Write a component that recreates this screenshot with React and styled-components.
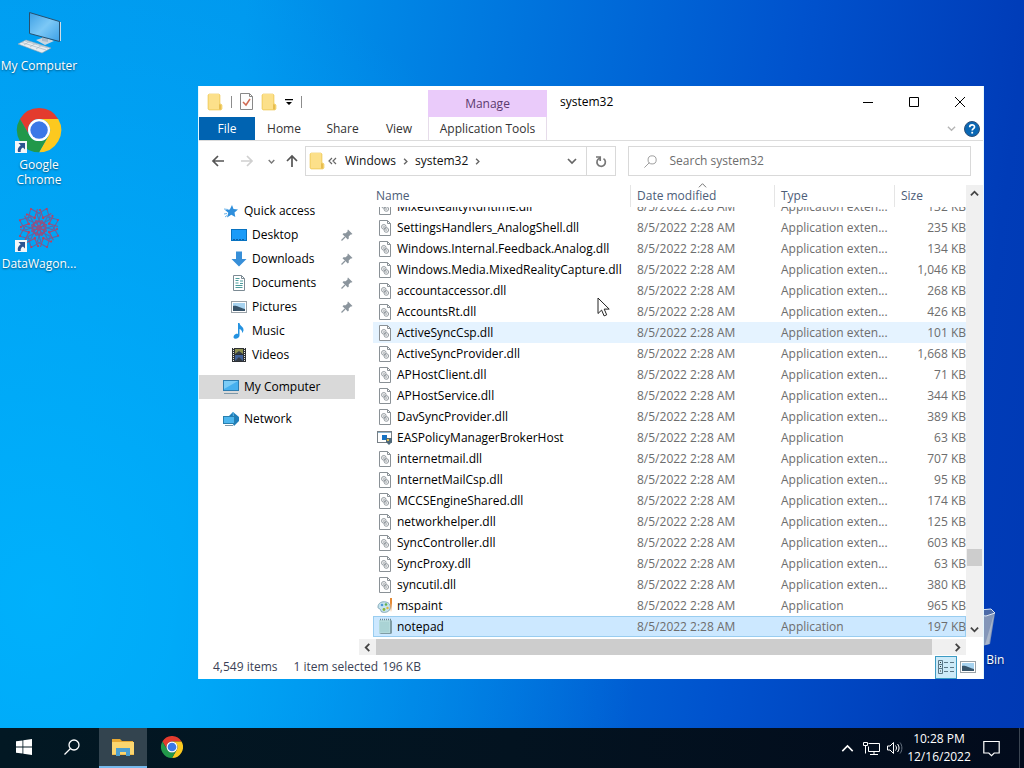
import React from "react";
import styled, { createGlobalStyle, css } from "styled-components";

const GlobalStyles = createGlobalStyle`
  * {
    box-sizing: border-box;
  }

  body {
    margin: 0;
    font-family: "Open Sans", "Noto Sans", sans-serif;
    font-size: 12px;
    line-height: 16px;
    color: #1a1a1a;
  }

  button, input {
    font: inherit;
    color: inherit;
  }

  button {
    display: flex;
    align-items: center;
    justify-content: center;
    flex: none;
    margin: 0;
    padding: 0;
    border: none;
    background: none;
  }

  svg {
    display: block;
    flex: none;
  }
`;

/* ---------- desktop ---------- */

const Screen = styled.div`
  display: flex;
  flex-direction: column;
  height: 100vh;
  overflow: hidden;
  background:
    radial-gradient(ellipse 600px 680px at 4% 78%, rgba(0, 182, 255, 0.8), rgba(0, 172, 255, 0) 100%),
    linear-gradient(97deg, #009cf0 0%, #0098ee 22%, #0076de 46%, #0052cd 72%, #003cb8 92%, #0039b4 100%);
`;

const Desktop = styled.main`
  position: relative;
  flex: 1;
  min-height: 0;
`;

const Shortcuts = styled.div`
  display: flex;
  flex-direction: column;
  width: 78px;
  padding-top: 8px;
`;

const ShortcutButton = styled.button`
  flex-direction: column;
  justify-content: flex-start;
  gap: 2px;
  width: 78px;
  height: 99px;
  color: #fff;
  line-height: 15px;
  text-shadow: 0 1px 2px rgba(0, 0, 0, 0.5);
`;

const BinSpot = styled.div`
  position: absolute;
  right: 12px;
  bottom: 27px;
`;

/* ---------- window ---------- */

const Window = styled.section`
  position: absolute;
  top: 86px;
  left: 198px;
  right: 40px;
  bottom: 49px;
  display: flex;
  flex-direction: column;
  border: solid #e4f8ff;
  border-width: 0 1px;
  background: #fff;
`;

const Ribbon = styled.header`
  display: grid;
  grid-template-columns: 229px 119px 1fr;
  grid-template-rows: 31px 23px;
  border-bottom: 1px solid #dcdcdc;
`;

const QuickBar = styled.div`
  display: flex;
  align-items: center;
  gap: 8px;
  padding-left: 8px;
`;

const Divider = styled.span`
  width: 1px;
  height: 12px;
  background: #8c8c8c;
`;

const ManageTitle = styled.div`
  margin-top: 4px;
  line-height: 28px;
  text-align: center;
  color: #5b3a6e;
  background: #eacbfa;
`;

const TitleArea = styled.div`
  display: flex;
  align-items: center;
  justify-content: space-between;
  padding-left: 13px;
`;

const Title = styled.h1`
  margin: 0;
  font-size: 12px;
  font-weight: 400;
  color: #000;
`;

const Captions = styled.div`
  display: flex;

  button {
    width: 46px;
    height: 30px;
  }
`;

const Tabs = styled.nav`
  display: flex;
`;

const Tab = styled.button`
  width: ${(p) => p.$width}px;
  color: #333;

  ${(p) =>
    p.$file &&
    css`
      color: #fff;
      background: #0063b1;
    `}

  ${(p) =>
    p.$context &&
    css`
      border: solid #e6dcea;
      border-width: 0 1px;
    `}
`;

const RibbonEnd = styled.div`
  display: flex;
  align-items: center;
  justify-content: flex-end;
  gap: 8px;
  padding-right: 3px;
`;

const AddressRow = styled.div`
  display: flex;
  align-items: center;
  height: 40px;
  padding: 0 12px 0 7px;
`;

const NavButton = styled.button`
  width: ${(p) => p.$width}px;
  height: 24px;
`;

const AddressBox = styled.div`
  display: flex;
  align-items: center;
  flex: 306;
  height: 30px;
  padding-left: 3px;
  border: 1px solid #d9d9d9;
`;

const Crumb = styled.button`
  padding: 0 6px;
  color: #111;
`;

const AddressEnd = styled.div`
  display: flex;
  height: 100%;
  margin-left: auto;

  button {
    width: 29px;
  }

  button:last-child {
    border-left: 1px solid #d9d9d9;
  }
`;

const SearchBox = styled.label`
  display: flex;
  align-items: center;
  gap: 12px;
  flex: 325;
  height: 30px;
  margin-left: 12px;
  padding-left: 15px;
  border: 1px solid #d9d9d9;

  input {
    flex: 1;
    min-width: 0;
    padding: 0;
    border: none;
    outline: none;
    background: none;
  }

  input::placeholder {
    color: #6d6d6d;
    opacity: 1;
  }
`;

const Body = styled.div`
  display: grid;
  grid-template-columns: 160px minmax(0, 1fr);
  flex: 1;
  min-height: 0;
  padding-top: 4px;
`;

const Sidebar = styled.nav`
  display: flex;
  flex-direction: column;
  padding: 14px 4px 0 0;
`;

const PlaceLink = styled.a`
  display: flex;
  align-items: center;
  gap: 5px;
  height: 24px;
  margin-top: ${(p) => (p.$gap ? 8 : 0)}px;
  padding: 0 2px 0 ${(p) => (p.$child ? 32 : 24)}px;
  color: #000;
  text-decoration: none;
  background: ${(p) => (p.$active ? "#d9d9d9" : "none")};

  svg:nth-of-type(2) {
    margin-left: auto;
  }
`;

const Listing = styled.div`
  display: grid;
  grid-template-columns: minmax(0, 1fr) 17px;
  grid-template-rows: minmax(0, 1fr) 18px;
  min-height: 0;
`;

const FileTable = styled.table`
  display: flex;
  flex-direction: column;
  min-height: 0;
  padding-left: 14px;

  tr {
    display: grid;
    grid-template-columns: minmax(0, 1fr) 144px 120px 72px;
    flex: none;
  }

  th, td {
    padding: 0;
    white-space: nowrap;
  }

  tbody {
    display: flex;
    flex-direction: column;
    justify-content: flex-end;
    flex: 1;
    min-height: 0;
    overflow: hidden;
  }
`;

const HeadCell = styled.th`
  position: relative;
  height: 22px;
  border-left: ${(p) => (p.$first ? "none" : "1px solid #e5e5e5")};

  button {
    justify-content: flex-start;
    width: 100%;
    height: 22px;
    padding-left: ${(p) => (p.$first ? 3 : 6)}px;
    font-weight: 400;
    color: #4c5d78;
  }

  svg {
    position: absolute;
    top: -4px;
    left: 50%;
    margin-left: -5px;
  }
`;

const FileRow = styled.tr`
  height: 21px;
  line-height: 21px;
  color: #6d6d6d;
  background: ${(p) => (p.$hover ? "#e5f3ff" : "none")};

  ${(p) =>
    p.$selected &&
    css`
      background: #cce8ff;
      box-shadow: inset 0 0 0 1px #99cdf0;
    `}

  td:nth-child(n + 2) {
    padding-left: 7px;
  }

  td:last-child {
    padding: 0;
    text-align: right;
  }
`;

const NameCell = styled.td`
  display: flex;
  align-items: center;
  gap: 4px;
  color: #000;

  svg {
    margin-left: 4px;
  }
`;

const VScroll = styled.div`
  display: flex;
  flex-direction: column;
  align-items: center;
  background: #f0f0f0;

  button {
    width: 17px;
    height: 16px;
  }
`;

const VTrack = styled.div`
  display: flex;
  flex-direction: column;
  flex: 1;
  width: 15px;

  &::before {
    content: "";
    flex: 346;
  }

  &::after {
    content: "";
    flex: 55;
  }
`;

const VThumb = styled.div`
  height: 17px;
  background: #cdcdcd;
`;

const HScroll = styled.div`
  display: flex;
  align-items: stretch;
  height: 16px;
  margin-top: 2px;
  background: #f0f0f0;

  button {
    width: 17px;
  }
`;

const HThumb = styled.div`
  flex: 1;
  margin-right: 17px;
  background: #cdcdcd;
`;

const StatusBar = styled.footer`
  display: flex;
  align-items: center;
  height: 24px;
  padding: 0 4px 0 14px;
  color: #3a3f55;
`;

const StatusText = styled.span`
  margin-right: ${(p) => p.$after || 0}px;
`;

const ViewButtons = styled.div`
  display: flex;
  margin-left: auto;
`;

const ViewButton = styled.button`
  width: 22px;
  height: 23px;
  border: 1px solid ${(p) => (p.$on ? "#3c9bc4" : "transparent")};
  background: ${(p) => (p.$on ? "#cdeaf8" : "none")};
`;

const Pointer = styled.div`
  position: absolute;
  top: 297px;
  left: 597px;
`;

/* ---------- taskbar ---------- */

const Taskbar = styled.footer`
  display: flex;
  align-items: stretch;
  height: 40px;
  color: #fff;
  background: linear-gradient(90deg, #021823, #031320 50%, #020b1c);
`;

const TaskButton = styled.button`
  width: 48px;
  border-bottom: 2px solid ${(p) => (p.$open ? "#76b9ed" : "transparent")};
  background: ${(p) => (p.$open ? "#33444f" : "none")};
`;

const Pinned = styled.div`
  display: flex;
  gap: 1px;
  margin-left: 3px;
`;

const Tray = styled.div`
  display: flex;
  align-items: stretch;
  margin-left: auto;
  padding-right: 4px;
`;

const TrayButton = styled.button`
  width: ${(p) => p.$width}px;
  text-align: center;
  line-height: 18px;
`;

const ShowDesktop = styled.button`
  width: 1px;
  margin-left: 8px;
  background: #3b4552;
`;

/* ---------- icons ---------- */

const Chevron = ({ dir = "down", size = 9, color = "#666", stroke = 1.5 }) => {
  const paths = {
    down: "M1 3l4 4 4-4",
    up: "M1 7l4-4 4 4",
    left: "M7 1L3 5l4 4",
    right: "M3 1l4 4-4 4",
  };
  return (
    <svg width={size} height={size} viewBox="0 0 10 10" fill="none" stroke={color} strokeWidth={stroke}>
      <path d={paths[dir]} />
    </svg>
  );
};

const ChromeShapes = () => (
  <>
    <path fill="#e33b2e" d="M3.2 12A24 24 0 0 1 44.8 12L24 12A12 12 0 0 0 13.6 30Z" />
    <path fill="#fcc91f" d="M44.8 12A24 24 0 0 1 24 48L34.4 30A12 12 0 0 0 24 12Z" />
    <path fill="#22984a" d="M24 48A24 24 0 0 1 3.2 12L13.6 30A12 12 0 0 0 34.4 30Z" />
    <circle cx="24" cy="24" r="12" fill="#fff" />
    <circle cx="24" cy="24" r="9.5" fill="#3b78e7" />
  </>
);

const ChromeIcon = ({ size }) => (
  <svg width={size} height={size} viewBox="0 0 48 48">
    <ChromeShapes />
  </svg>
);

const ShortcutArrow = () => (
  <g>
    <rect x="0" y="34" width="12" height="12" fill="#f4f6f8" />
    <path d="M3.500 36H10v6.500L8 40.500c-2 1-2.500 2.500-2.300 4.500H3c-.8-3 .3-5 2.700-6.800z" fill="#2c5390" />
  </g>
);

const ComputerDesktopIcon = () => (
  <svg width="48" height="48" viewBox="0 0 48 48">
    <defs>
      <linearGradient id="screen" x1="0" y1="0" x2="1" y2="1">
        <stop offset="0" stopColor="#3c9fe4" />
        <stop offset="0.5" stopColor="#7cc8f6" />
        <stop offset="1" stopColor="#3ba0e6" />
      </linearGradient>
    </defs>
    <path d="M21 32l9-3 9 4-9 4z" fill="#c9d6e0" />
    <path d="M27 28l6 2v4l-6-1z" fill="#a8bccc" />
    <path d="M14.500 4.500l30 9v20l-30-8z" fill="url(#screen)" stroke="#27506f" />
    <path d="M45.500 14v19" stroke="#cfdde8" />
    <path d="M3 36l8-4 25 8-9 5z" fill="#e7edf1" stroke="#8fa3b2" strokeWidth=".6" />
    <path d="M7 34.500l24 7.500M10 33l23 7M9 37l6-4M15 39l6-4M21 41l6-4" stroke="#9db0bd" strokeWidth=".6" />
  </svg>
);

const ChromeShortcut = () => (
  <svg width="48" height="48" viewBox="0 0 48 48">
    <g transform="translate(2 1) scale(.92)">
      <ChromeShapes />
    </g>
    <ShortcutArrow />
  </svg>
);

const DataWagonIcon = () => (
  <svg width="48" height="48" viewBox="0 0 48 48">
    <g fill="none" stroke="#5f66a5" strokeWidth="1.1">
      {[0, 45, 90, 135, 180, 225, 270, 315].map((a) => (
        <g key={a} transform={`rotate(${a + 22} 24 22)`}>
          <path d="M24 18l7-8-7-9-7 9z" />
          <path d="M24 14l5 4-5 3-5-3zM18 4l6 7 6-7" stroke="#96507f" />
          <circle cx="24" cy="11" r="1.3" fill="#c23f5c" stroke="none" />
          <circle cx="24" cy="1.500" r="1" fill="#c23f5c" stroke="none" />
          <circle cx="18" cy="5" r="1" fill="#c23f5c" stroke="none" />
        </g>
      ))}
    </g>
    <ShortcutArrow />
  </svg>
);

const RecycleBinIcon = () => (
  <svg width="48" height="48" viewBox="0 0 48 48">
    <path d="M6 10l36-2 4 3-5 31-8 2H14z" fill="#8a9bb8" opacity=".95" />
    <path d="M6 10l36-3 4 4-9 3z" fill="#4c6ba8" stroke="#dde6f2" />
    <path d="M45 12l-5 30-4 1z" fill="#a9b6ca" />
  </svg>
);

const FolderIcon = () => (
  <svg width="16" height="18" viewBox="0 0 16 18">
    <path d="M2 1h10l1 1v9h1l1 1v4l-1 1H2l-1-1V2z" fill="#f8d872" stroke="#efcd68" strokeWidth=".7" />
    <path d="M2 1h10v15H2z" fill="#fce08a" />
    <path d="M12 11l2 1v4l-1 1-1-1z" fill="#e7bd50" />
  </svg>
);

const PropertiesIcon = () => (
  <svg width="13" height="17" viewBox="0 0 13 17" fill="none">
    <path d="M.5 .5h9l3 3v13H.5z" fill="#fdfdfd" stroke="#888" />
    <path d="M9.500 .5v3h3" stroke="#888" />
    <path d="M3 9l3 3 4-6" stroke="#cf6a52" strokeWidth="1.500" />
  </svg>
);

const CustomizeIcon = () => (
  <svg width="8" height="8" viewBox="0 0 8 8">
    <path d="M0 1h8v1.200H0zM1 4h6L4 7z" fill="#000" />
  </svg>
);

const ArrowIcon = ({ dir, color }) => {
  const turns = { left: 0, up: 90, right: 180 };
  return (
    <svg width="14" height="14" viewBox="0 0 14 14" fill="none" stroke={color} strokeWidth="1.700">
      <path d="M13 7H2M7 2L2 7l5 5" transform={`rotate(${turns[dir]} 7 7)`} />
    </svg>
  );
};

const BackCrumbs = () => (
  <svg width="9" height="8" viewBox="0 0 9 8" fill="none" stroke="#666" strokeWidth="1.200">
    <path d="M4 1L1 4l3 3M8 1L5 4l3 3" />
  </svg>
);

const RefreshIcon = () => (
  <svg width="12" height="13" viewBox="0 0 12 13" fill="none" stroke="#777" strokeWidth="1.700">
    <path d="M4.600 3.200A4.200 4.200 0 1 0 8.500 3.600M1 2h4.200v4" />
  </svg>
);

const SearchIcon = ({ size, color, stroke = 1 }) => (
  <svg width={size} height={size} viewBox="0 0 16 16" fill="none" stroke={color} strokeWidth={stroke}>
    <circle cx="10" cy="6" r="5" />
    <path d="M6.500 9.500L.5 15.500" />
  </svg>
);

const HelpIcon = () => (
  <svg width="16" height="16" viewBox="0 0 16 16">
    <circle cx="8" cy="8" r="7.500" fill="#0a67b3" stroke="#2f4f77" />
    <path d="M5.700 6.200c0-3 4.800-3 4.800-.3 0 1.700-2.300 1.700-2.300 3.600" fill="none" stroke="#fff" strokeWidth="1.700" />
    <rect x="7.300" y="10.800" width="1.800" height="1.800" fill="#fff" />
  </svg>
);

const StarIcon = () => (
  <svg width="16" height="16" viewBox="0 0 16 16">
    <path d="M9 2l1.500 4 4.500.5-3.500 3 .8 4.500-4-2.300L4 14.500l1.300-4.800L2 7l4.800-.6z" fill="#2f8fdc" />
    <path d="M1 6l4 .5M1 11l3-.5M2 14l2-1.500" stroke="#6bb3ea" />
  </svg>
);

const DesktopIcon = () => (
  <svg width="16" height="16" viewBox="0 0 16 16">
    <rect x=".5" y="2.500" width="15" height="11" fill="#1a9bf8" stroke="#0872c0" />
    <path d="M2 12.500h12" stroke="#0b5fa5" strokeDasharray="2 1" />
  </svg>
);

const DownloadIcon = () => (
  <svg width="16" height="16" viewBox="0 0 16 16">
    <path d="M5 .5h6V8h4.500L8 15.500.5 8H5z" fill="#378fd8" />
  </svg>
);

const DocumentIcon = () => (
  <svg width="16" height="16" viewBox="0 0 16 16" fill="none">
    <path d="M2.500 .5h8l3 3v12h-11z" fill="#fff" stroke="#7c8b94" />
    <path d="M10.500 .5v3h3" stroke="#7c8b94" />
    <path d="M4.500 3.500h4M4.500 5.500h3M9 6h3M4.500 8h3M9 8.500h3M4.500 10.500h7M4.500 12.500h7" stroke="#4d9c9c" />
  </svg>
);

const PictureIcon = () => (
  <svg width="16" height="12" viewBox="0 0 16 12">
    <rect x=".5" y=".5" width="15" height="11" fill="#fff" stroke="#9aa2a8" />
    <path d="M2 2h12v8H2z" fill="#a7d3f0" />
    <path d="M2 5c3-1 5 1 12 3v2H2z" fill="#38546a" />
  </svg>
);

const MusicIcon = () => (
  <svg width="16" height="16" viewBox="0 0 16 16">
    <path d="M7 0h1.500c.3 3 4.500 3.500 4 7.500-.3 1-.8 2-1.500 2.500.5-2-1-3.500-2.500-4v6.500c0 2-2 3.200-4 3.200S2 14 3 12.500s2.800-2 4-1.500z" fill="#2492e0" />
  </svg>
);

const VideoIcon = () => (
  <svg width="16" height="16" viewBox="0 0 16 16">
    <rect x="1" y="1" width="14" height="14" fill="#2e3135" />
    <path d="M2.500 1v14M13.500 1v14" stroke="#e8e8e8" strokeDasharray="1 1" />
    <rect x="4" y="2" width="8" height="5" fill="#8e9252" />
    <rect x="4" y="8" width="8" height="6" fill="#42629a" />
    <path d="M4 7l4-3 4 3M4 14l4-4 4 4" fill="#343c46" />
  </svg>
);

const PcIcon = () => (
  <svg width="16" height="16" viewBox="0 0 16 16">
    <rect x=".5" y="1.500" width="15" height="10" fill="#46b0ef" stroke="#2d7db0" />
    <path d="M1 2h14L1 10z" fill="#7bccf7" />
    <path d="M1 14.500h14" stroke="#7c97a8" />
  </svg>
);

const NetworkIcon = () => (
  <svg width="16" height="16" viewBox="0 0 16 16">
    <path d="M6 5l4-4 6 5v4l-5 5z" fill="#1f7eba" />
    <path d="M10 1l1 10" stroke="#66bde9" />
    <rect x=".5" y="5.500" width="11" height="7" fill="#4eb6ee" stroke="#287fae" />
    <path d="M2 14.500h8" stroke="#7c97a8" />
  </svg>
);

const PinIcon = () => (
  <svg width="12" height="12" viewBox="0 0 12 12">
    <path d="M7 .5L11.500 5l-1 .6-.8-.2-2 2 .1 2.100-1 1L1.500 5.200l1-1 2.200.1 2-2-.2-1z" fill="#8b959d" />
    <path d="M4 8L.5 11.500" stroke="#8b959d" strokeWidth="1.200" />
  </svg>
);

const DllIcon = () => (
  <svg width="16" height="16" viewBox="0 0 16 16" fill="none" stroke="#8a9196">
    <path d="M2.500 .5h8l3 3v12h-11z" fill="#fff" />
    <path d="M10.500 .5v3h3" />
    <circle cx="6.800" cy="6.800" r="2.300" strokeWidth=".9" />
    <circle cx="6.800" cy="6.800" r=".8" strokeWidth=".6" />
    <circle cx="9.300" cy="10" r="2.300" strokeWidth=".9" />
    <circle cx="9.300" cy="10" r=".8" strokeWidth=".6" />
  </svg>
);

const BrokerIcon = () => (
  <svg width="16" height="14" viewBox="0 0 16 14">
    <rect x=".5" y=".5" width="14" height="11" fill="#fff" stroke="#777f85" />
    <path d="M1 1.500h13" stroke="#8fb5cc" />
    <rect x="5" y="4" width="5" height="5" fill="#1673c4" />
    <path d="M9 7h6v4l-3 3-3-3z" fill="#4e6879" />
    <path d="M10 8h2v2h-2z" fill="#d9bd52" />
  </svg>
);

const PaintIcon = () => (
  <svg width="16" height="16" viewBox="0 0 16 16">
    <path d="M1 9c0-4 4-6 8-5s5 4 4 7-5 4-8 3c-2-.5-.5-2-2-3-1-.5-2-.5-2-2z" fill="#c6e3ee" stroke="#6d98a9" strokeWidth=".8" />
    <circle cx="5" cy="7" r="1.300" fill="#4c95d6" />
    <circle cx="9" cy="6.500" r="1.300" fill="#63b14e" />
    <circle cx="7" cy="11.500" r="1.400" fill="#8bb53a" />
    <circle cx="10.500" cy="10" r="1.200" fill="#e2b63a" />
    <path d="M13 0h2v5l-1 9-1-9z" fill="#e58a35" />
  </svg>
);

const NotepadIcon = () => (
  <svg width="16" height="17" viewBox="0 0 16 17">
    <path d="M2 2h12l1 1v12l-1 1H4l-2-1z" fill="#7f9ca4" />
    <path d="M2 2h11v13H2z" fill="#b4dadb" />
    <path d="M3 5h9M3 7h9M3 9h9M3 11h9M3 13h9" stroke="#98c6ca" strokeWidth=".7" />
    <path d="M3 1.500h11" stroke="#6f8891" strokeWidth="1.500" strokeDasharray="1 1" />
  </svg>
);

const DetailsViewIcon = () => (
  <svg width="17" height="14" viewBox="0 0 17 14" fill="none" stroke="#5b7786">
    <path d="M.5 .5h4v4h-4zM.5 4.500h4v4h-4zM.5 8.500h4v5h-4z" />
    <path d="M2 2.500h1M2 6.500h1M2 11h1" stroke="#333" />
    <path d="M6 2.500h4M12 2.500h4M6 7.500h4M12 7.500h4M6 11.500h4M12 11.500h4" />
  </svg>
);

const StartIcon = () => (
  <svg width="16" height="16" viewBox="0 0 16 16" fill="#fff">
    <path d="M0 2.300L6.500 1.400v6.200H0zM7.300 1.300L16 0v7.600H7.300zM0 8.400h6.500v6.200L0 13.700zM7.300 8.400H16V16l-8.700-1.300z" />
  </svg>
);

const ExplorerIcon = () => (
  <svg width="22" height="18" viewBox="0 0 22 18">
    <path d="M0 1h8l2 2h11v14H0z" fill="#e8a932" />
    <path d="M0 4h22v13H0z" fill="#fbd66f" />
    <path d="M0 16.500h22" stroke="#f1bd4d" />
    <path d="M4 18v-8h14v8h-4v-4H8v4z" fill="#4c9fd0" />
  </svg>
);

const EthernetIcon = () => (
  <svg width="17" height="14" viewBox="0 0 17 14" fill="none" stroke="#fff">
    <path d="M5.500 2.500h11v8h-11v-5M.5 1.500h4v3h-4zM2.500 4.500v8M7 13.500h8M11 10.500v3" />
  </svg>
);

const SpeakerIcon = () => (
  <svg width="16" height="14" viewBox="0 0 16 14" fill="none" stroke="#fff">
    <path d="M.5 5h2.500l3.500-3.500v11L3 9H.5zM8.500 4.500c1.300 1.500 1.300 3.500 0 5M10.500 3c2 2.500 2 5.500 0 8" />
    <path d="M13 1.500c2.500 3 2.500 8 0 11" stroke="#667280" />
  </svg>
);

const ActionCenterIcon = () => (
  <svg width="17" height="17" viewBox="0 0 17 17" fill="none" stroke="#fff" strokeWidth="1.200">
    <path d="M.8 1.500h15.400v11.500h-5L8.500 15.700 5.800 13h-5z" />
  </svg>
);

/* ---------- data ---------- */

const EXT = "Application exten...";
const MODIFIED = "8/5/2022 2:28 AM";

const files = [
  { name: "MixedRealityRuntime.dll", type: EXT, size: "132 KB" },
  { name: "SettingsHandlers_AnalogShell.dll", type: EXT, size: "235 KB" },
  { name: "Windows.Internal.Feedback.Analog.dll", type: EXT, size: "134 KB" },
  { name: "Windows.Media.MixedRealityCapture.dll", type: EXT, size: "1,046 KB" },
  { name: "accountaccessor.dll", type: EXT, size: "268 KB" },
  { name: "AccountsRt.dll", type: EXT, size: "426 KB" },
  { name: "ActiveSyncCsp.dll", type: EXT, size: "101 KB", hover: true },
  { name: "ActiveSyncProvider.dll", type: EXT, size: "1,668 KB" },
  { name: "APHostClient.dll", type: EXT, size: "71 KB" },
  { name: "APHostService.dll", type: EXT, size: "344 KB" },
  { name: "DavSyncProvider.dll", type: EXT, size: "389 KB" },
  { name: "EASPolicyManagerBrokerHost", type: "Application", size: "63 KB", icon: BrokerIcon },
  { name: "internetmail.dll", type: EXT, size: "707 KB" },
  { name: "InternetMailCsp.dll", type: EXT, size: "95 KB" },
  { name: "MCCSEngineShared.dll", type: EXT, size: "174 KB" },
  { name: "networkhelper.dll", type: EXT, size: "125 KB" },
  { name: "SyncController.dll", type: EXT, size: "603 KB" },
  { name: "SyncProxy.dll", type: EXT, size: "63 KB" },
  { name: "syncutil.dll", type: EXT, size: "380 KB" },
  { name: "mspaint", type: "Application", size: "965 KB", icon: PaintIcon },
  { name: "notepad", type: "Application", size: "197 KB", icon: NotepadIcon, selected: true },
];

const places = [
  { name: "Quick access", icon: StarIcon },
  { name: "Desktop", icon: DesktopIcon, child: true, pinned: true },
  { name: "Downloads", icon: DownloadIcon, child: true, pinned: true },
  { name: "Documents", icon: DocumentIcon, child: true, pinned: true },
  { name: "Pictures", icon: PictureIcon, child: true, pinned: true },
  { name: "Music", icon: MusicIcon, child: true },
  { name: "Videos", icon: VideoIcon, child: true },
  { name: "My Computer", icon: PcIcon, gap: true, active: true },
  { name: "Network", icon: NetworkIcon, gap: true },
];

/* ---------- parts ---------- */

function Shortcut({ icon, children }) {
  return (
    <ShortcutButton>
      {icon}
      <span>{children}</span>
    </ShortcutButton>
  );
}

function WindowRibbon() {
  return (
    <Ribbon>
      <QuickBar>
        <FolderIcon />
        <Divider />
        <button aria-label="Properties"><PropertiesIcon /></button>
        <button aria-label="New folder"><FolderIcon /></button>
        <button aria-label="Customize toolbar"><CustomizeIcon /></button>
        <Divider />
      </QuickBar>
      <ManageTitle>Manage</ManageTitle>
      <TitleArea>
        <Title>system32</Title>
        <Captions>
          <button aria-label="Minimize">
            <svg width="10" height="10" viewBox="0 0 10 10"><path d="M0 5.500h10" stroke="#000" /></svg>
          </button>
          <button aria-label="Maximize">
            <svg width="10" height="10" viewBox="0 0 10 10"><path d="M.5 .5h9v9h-9z" fill="none" stroke="#000" /></svg>
          </button>
          <button aria-label="Close">
            <svg width="10" height="10" viewBox="0 0 10 10"><path d="M0 0l10 10M10 0L0 10" stroke="#000" /></svg>
          </button>
        </Captions>
      </TitleArea>
      <Tabs>
        <Tab $width={56} $file>File</Tab>
        <Tab $width={58}>Home</Tab>
        <Tab $width={59}>Share</Tab>
        <Tab $width={54}>View</Tab>
      </Tabs>
      <Tab $width={119} $context>Application Tools</Tab>
      <RibbonEnd>
        <button aria-label="Expand ribbon"><Chevron color="#b5b5b5" /></button>
        <button aria-label="Help"><HelpIcon /></button>
      </RibbonEnd>
    </Ribbon>
  );
}

function AddressBar() {
  return (
    <AddressRow>
      <NavButton $width={24} aria-label="Back"><ArrowIcon dir="left" color="#555" /></NavButton>
      <NavButton $width={34} aria-label="Forward"><ArrowIcon dir="right" color="#d0d0d0" /></NavButton>
      <NavButton $width={15} aria-label="Recent locations"><Chevron size={7} stroke={2} color="#777" /></NavButton>
      <NavButton $width={26} aria-label="Up"><ArrowIcon dir="up" color="#555" /></NavButton>
      <AddressBox>
        <FolderIcon />
        <NavButton $width={14} aria-label="Parent folders"><BackCrumbs /></NavButton>
        <Crumb>Windows</Crumb>
        <Chevron dir="right" size={7} stroke={2} />
        <Crumb>system32</Crumb>
        <Chevron dir="right" size={7} stroke={2} />
        <AddressEnd>
          <button aria-label="Previous locations"><Chevron size={10} stroke={1.700} /></button>
          <button aria-label="Refresh"><RefreshIcon /></button>
        </AddressEnd>
      </AddressBox>
      <SearchBox>
        <SearchIcon size={13} color="#888" />
        <input type="text" placeholder="Search system32" aria-label="Search system32" />
      </SearchBox>
    </AddressRow>
  );
}

function PlaceList() {
  return (
    <Sidebar>
      {places.map(({ name, icon: Icon, child, pinned, gap, active }) => (
        <PlaceLink href="#" key={name} $child={child} $gap={gap} $active={active}>
          <Icon />
          {name}
          {pinned && <PinIcon />}
        </PlaceLink>
      ))}
    </Sidebar>
  );
}

function FileList() {
  return (
    <Listing>
      <FileTable>
        <thead>
          <tr>
            <HeadCell $first><button>Name</button></HeadCell>
            <HeadCell>
              <button>Date modified</button>
              <Chevron dir="up" size={9} stroke={1} />
            </HeadCell>
            <HeadCell><button>Type</button></HeadCell>
            <HeadCell><button>Size</button></HeadCell>
          </tr>
        </thead>
        <tbody>
          {files.map(({ name, type, size, hover, selected, icon: Icon = DllIcon }) => (
            <FileRow key={name} $hover={hover} $selected={selected}>
              <NameCell><Icon />{name}</NameCell>
              <td>{MODIFIED}</td>
              <td>{type}</td>
              <td>{size}</td>
            </FileRow>
          ))}
        </tbody>
      </FileTable>
      <VScroll>
        <button aria-label="Scroll up"><Chevron dir="up" stroke={2} color="#444" /></button>
        <VTrack><VThumb /></VTrack>
        <button aria-label="Scroll down"><Chevron stroke={2} color="#444" /></button>
      </VScroll>
      <HScroll>
        <button aria-label="Scroll left"><Chevron dir="left" stroke={2} color="#444" /></button>
        <HThumb />
        <button aria-label="Scroll right"><Chevron dir="right" stroke={2} color="#444" /></button>
      </HScroll>
    </Listing>
  );
}

function ExplorerWindow() {
  return (
    <Window>
      <WindowRibbon />
      <AddressBar />
      <Body>
        <PlaceList />
        <FileList />
      </Body>
      <StatusBar>
        <StatusText $after={16}>4,549 items</StatusText>
        <StatusText $after={4}>1 item selected</StatusText>
        <StatusText>196 KB</StatusText>
        <ViewButtons>
          <ViewButton $on aria-label="Details view"><DetailsViewIcon /></ViewButton>
          <ViewButton aria-label="Large icons view"><PictureIcon /></ViewButton>
        </ViewButtons>
      </StatusBar>
    </Window>
  );
}

function App() {
  return (
    <Screen>
      <GlobalStyles />
      <Desktop>
        <Shortcuts>
          <Shortcut icon={<ComputerDesktopIcon />}>My Computer</Shortcut>
          <Shortcut icon={<ChromeShortcut />}>Google<br />Chrome</Shortcut>
          <Shortcut icon={<DataWagonIcon />}>DataWagon...</Shortcut>
        </Shortcuts>
        <BinSpot>
          <Shortcut icon={<RecycleBinIcon />}>Recycle Bin</Shortcut>
        </BinSpot>
        <ExplorerWindow />
        <Pointer>
          <svg width="15" height="21" viewBox="0 0 15 21">
            <path d="M1 1v15.500l3.600-3.400 2.500 5.800 2.600-1.100-2.500-5.700h5z" fill="#fff" stroke="#222" />
          </svg>
        </Pointer>
      </Desktop>
      <Taskbar>
        <TaskButton aria-label="Start"><StartIcon /></TaskButton>
        <TaskButton aria-label="Search"><SearchIcon size={16} color="#fff" stroke={1.300} /></TaskButton>
        <Pinned>
          <TaskButton $open aria-label="File Explorer"><ExplorerIcon /></TaskButton>
          <TaskButton aria-label="Google Chrome"><ChromeIcon size={22} /></TaskButton>
        </Pinned>
        <Tray>
          <TrayButton $width={24} aria-label="Show hidden icons"><Chevron dir="up" size={13} stroke={1.200} color="#fff" /></TrayButton>
          <TrayButton $width={24} aria-label="Network"><EthernetIcon /></TrayButton>
          <TrayButton $width={24} aria-label="Volume"><SpeakerIcon /></TrayButton>
          <TrayButton $width={64}>10:28 PM<br />12/16/2022</TrayButton>
          <TrayButton $width={40} aria-label="Notifications"><ActionCenterIcon /></TrayButton>
          <ShowDesktop aria-label="Show desktop" />
        </Tray>
      </Taskbar>
    </Screen>
  );
}

export default App;
